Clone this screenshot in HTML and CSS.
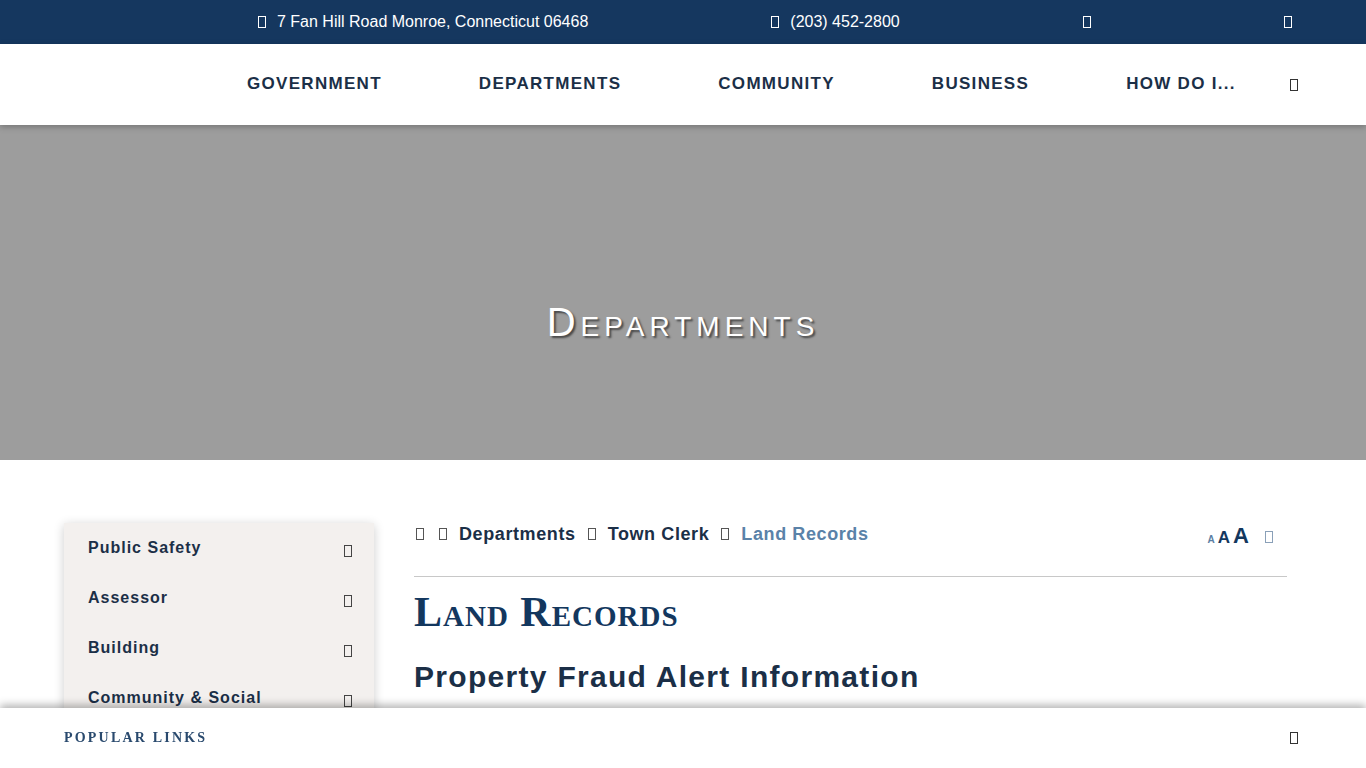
FILE: index.html
```html
<!DOCTYPE html>
<html lang="en">
<head>
    <meta charset="UTF-8">
    <meta name="viewport" content="width=device-width, initial-scale=1.0">
    <title>Land Records - Departments</title>
    <link rel="stylesheet" href="styles.css">
</head>
<body>
    <div class="topbar">
        <span class="top-item"><span class="ico"></span>7 Fan Hill Road Monroe, Connecticut 06468</span>
        <span class="top-item"><span class="ico"></span>(203) 452-2800</span>
        <span class="top-item"><span class="ico"></span></span>
        <span class="top-item last"><span class="ico"></span></span>
    </div>

    <nav class="mainnav">
        <a href="#">GOVERNMENT</a>
        <a href="#">DEPARTMENTS</a>
        <a href="#">COMMUNITY</a>
        <a href="#">BUSINESS</a>
        <a href="#">HOW DO I...</a>
        <span class="ico nav-ico"></span>
    </nav>

    <header class="hero">
        <h1>Departments</h1>
    </header>

    <div class="main">
        <aside class="sidebar">
            <div class="side-item"><span>Public Safety</span><span class="ico"></span></div>
            <div class="side-item"><span>Assessor</span><span class="ico"></span></div>
            <div class="side-item"><span>Building</span><span class="ico"></span></div>
            <div class="side-item"><span>Community &amp; Social</span><span class="ico"></span></div>
        </aside>

        <section class="content">
            <div class="crumbs">
                <div class="crumb-list">
                    <span class="ico first"></span>
                    <span class="ico"></span>
                    <a href="#">Departments</a>
                    <span class="ico"></span>
                    <a href="#">Town Clerk</a>
                    <span class="ico"></span>
                    <span class="current">Land Records</span>
                </div>
                <div class="sizer">
                    <span class="a-sm">A</span>
                    <span class="a-md">A</span>
                    <span class="a-lg">A</span>
                    <span class="ico"></span>
                </div>
            </div>
            <h2 class="page-title">Land Records</h2>
            <h3 class="sub-title">Property Fraud Alert Information</h3>
        </section>
    </div>

    <div class="popular">
        <span>POPULAR LINKS</span>
        <span class="ico"></span>
    </div>
</body>
</html>
```

FILE: styles.css
```css
body {
    margin: 0;
    font-family: "Liberation Sans", Arial, sans-serif;
    color: #1b2f47;
    background: #fff;
    overflow: hidden;
}
a {
    color: inherit;
    text-decoration: none;
}
.ico {
    display: inline-block;
    width: 6px;
    height: 10px;
    border: 1px solid currentColor;
    flex: none;
}
.topbar {
    height: 44px;
    background-color: #15375f;
    color: #fff;
    display: flex;
    align-items: center;
    gap: 183px;
    padding-left: 258px;
    font-size: 16px;
}
.top-item {
    display: flex;
    align-items: center;
    gap: 11px;
}
.top-item.last {
    margin-left: 10px;
}
.mainnav {
    position: relative;
    z-index: 2;
    height: 81px;
    background: #fff;
    display: flex;
    align-items: center;
    gap: 97px;
    padding-left: 247px;
    box-shadow: 0 2px 6px rgba(0, 0, 0, 0.25);
}
.mainnav a {
    font-size: 17px;
    font-weight: bold;
    letter-spacing: 1.3px;
    line-height: 20px;
    padding-bottom: 2px;
    color: #1b2f47;
}
.nav-ico {
    margin-left: -43px;
    color: #333;
}
.hero {
    height: 335px;
    background: #9d9d9d;
    display: flex;
    align-items: center;
    justify-content: center;
}
.hero h1 {
    margin: 0;
    padding-top: 60px;
    color: #fff;
    font-size: 40px;
    font-weight: normal;
    font-variant: small-caps;
    letter-spacing: 5px;
    text-shadow: 2px 2px 2px rgba(0, 0, 0, 0.55);
}
.main {
    display: flex;
    gap: 40px;
    padding: 63px 79px 0 64px;
}
.sidebar {
    width: 310px;
    flex: none;
    background: #f3f0ee;
    box-shadow: 0 2px 10px rgba(0, 0, 0, 0.2);
}
.side-item {
    height: 50px;
    display: flex;
    align-items: center;
    justify-content: space-between;
    padding: 0 22px 0 24px;
    font-size: 16px;
    font-weight: bold;
    letter-spacing: 1px;
    color: #1b2f47;
}
.side-item .ico {
    margin-top: 5px;
    color: #444;
}
.content {
    flex: 1;
}
.crumbs {
    display: flex;
    justify-content: space-between;
    align-items: center;
    height: 22px;
    padding-bottom: 31px;
    border-bottom: 1px solid #c8c8c8;
}
.crumb-list {
    display: flex;
    align-items: center;
    gap: 12px;
    padding-left: 2px;
    font-size: 18px;
    font-weight: bold;
    letter-spacing: 0.6px;
    color: #1b2f47;
}
.crumb-list .ico {
    color: #555;
}
.crumb-list .ico.first {
    margin-right: 3px;
}
.crumb-list .current {
    color: #5a82a8;
}
.sizer {
    display: flex;
    align-items: baseline;
    gap: 3px;
    padding-right: 14px;
    padding-top: 4px;
    font-weight: bold;
    color: #13375e;
}
.a-sm {
    font-size: 10px;
    color: #5a7ea3;
}
.a-md {
    font-size: 17px;
}
.a-lg {
    font-size: 22px;
}
.sizer .ico {
    margin-left: 13px;
    color: #8aa0b8;
}
.page-title {
    margin: 11px 0 0;
    font-family: "Liberation Serif", "Times New Roman", serif;
    font-variant: small-caps;
    font-size: 42px;
    font-weight: bold;
    letter-spacing: 1px;
    line-height: 48px;
    color: #13375e;
}
.sub-title {
    margin: 23px 0 0;
    font-size: 30px;
    font-weight: bold;
    letter-spacing: 1.3px;
    line-height: 36px;
    color: #1b2f47;
}
.popular {
    position: fixed;
    left: 0;
    right: 0;
    bottom: 0;
    height: 60px;
    background: #fff;
    display: flex;
    align-items: center;
    justify-content: space-between;
    padding: 0 68px 0 64px;
    box-shadow: 0 -3px 8px rgba(0, 0, 0, 0.3);
    font-family: "Liberation Serif", "Times New Roman", serif;
    font-size: 14px;
    font-weight: bold;
    letter-spacing: 2.2px;
    color: #2a4a6e;
}
.popular .ico {
    color: #333;
}
```
